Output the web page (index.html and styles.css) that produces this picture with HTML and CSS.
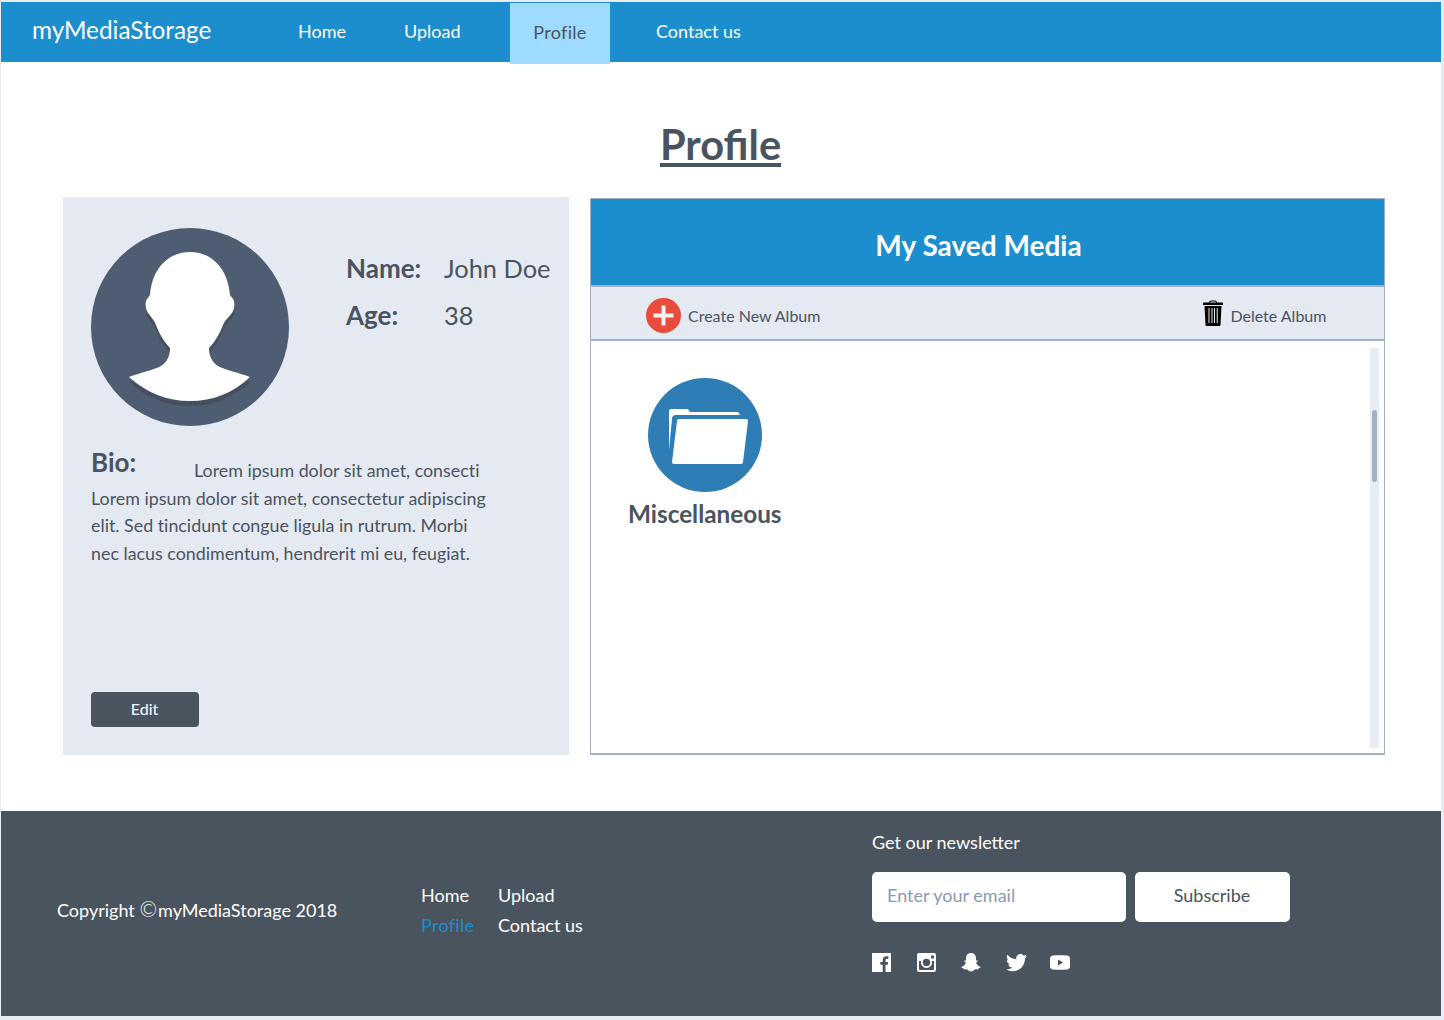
FILE: index.html
```html
<!DOCTYPE html>
<html lang="en">
<head>
<meta charset="utf-8">
<title>Profile - myMediaStorage</title>
<link rel="stylesheet" href="styles.css">
</head>
<body>
<div class="page">
  <header class="nav">
    <a class="brand">myMediaStorage</a>
    <nav class="nav-links">
      <a class="nav-link nav-home">Home</a>
      <a class="nav-link nav-upload">Upload</a>
      <a class="nav-link nav-active">Profile</a>
      <a class="nav-link nav-contact">Contact us</a>
    </nav>
  </header>

  <main class="main">
    <h1 class="title">Profile</h1>
    <div class="columns">
      <section class="card">
        <div class="card-top">
          <svg class="avatar" viewBox="0 0 198 198" aria-hidden="true">
            <circle cx="99" cy="99" r="99" fill="#4e5d72"/>
            <path fill="#454f61" transform="translate(0 5)" d="M99 24C78 24 61 40 59 67L56 71C54 74 54 80 57 85C60 89 63 92 65 97C68 105 73 114 79 120C79 128 76 134 70 138C63 142 48 145 38 149C56 165 76 173 99 173C122 173 142 165 159 149C149 145 134 142 127 138C121 134 118 128 118 120C124 114 129 105 132 97C134 92 138 89 141 85C144 80 144 74 142 71L139 67C137 40 120 24 99 24Z"/>
            <path fill="#fff" d="M99 24C78 24 61 40 59 67L56 71C54 74 54 80 57 85C60 89 63 92 65 97C68 105 73 114 79 120C79 128 76 134 70 138C63 142 48 145 38 149C56 165 76 173 99 173C122 173 142 165 159 149C149 145 134 142 127 138C121 134 118 128 118 120C124 114 129 105 132 97C134 92 138 89 141 85C144 80 144 74 142 71L139 67C137 40 120 24 99 24Z"/>
          </svg>
          <dl class="facts">
            <div class="fact"><dt>Name:</dt><dd>John Doe</dd></div>
            <div class="fact"><dt>Age:</dt><dd>38</dd></div>
          </dl>
        </div>
        <p class="bio"><strong class="bio-label">Bio:</strong>Lorem ipsum dolor sit amet, consecti<br>Lorem ipsum dolor sit amet, consectetur adipiscing elit. Sed tincidunt congue ligula in rutrum. Morbi nec lacus condimentum, hendrerit mi eu, feugiat.</p>
        <button class="edit" type="button">Edit</button>
      </section>

      <section class="media">
        <h2 class="media-head">My Saved Media</h2>
        <div class="toolbar">
          <a class="tool tool-create">
            <svg class="plus" viewBox="0 0 35 35" aria-hidden="true">
              <circle cx="17.5" cy="17.5" r="17.5" fill="#e74c3c"/>
              <path fill="#f4f4f4" d="M15.5 7.500h4v8h8v4h-8v8h-4v-8h-8v-4h8z"/>
            </svg>
            Create New Album
          </a>
          <a class="tool tool-delete">
            <svg class="trash" viewBox="0 0 20 26" aria-hidden="true">
              <path fill="#000" d="M6 2.500Q6 .5 8 .5H12Q14 .5 14 2.500H19.500Q20 2.500 20 3.500V5H0V3.500Q0 2.500 .5 2.500ZM7 2.500H13Q13 1.500 12 1.500H8Q7 1.500 7 2.500Z"/>
              <path fill="#000" fill-rule="evenodd" d="M1.500 6H18.500L17.500 25Q17.500 26 16.500 26H3.500Q2.500 26 2.500 25ZM5.500 8V23H6.500V8ZM8.500 8V23H9.500V8ZM11 8V23H12V8ZM13.700 8V23H14.700V8Z"/>
            </svg>
            Delete Album
          </a>
        </div>
        <div class="media-body">
          <div class="album">
            <svg class="folder" viewBox="0 0 114 114" aria-hidden="true">
              <circle cx="57" cy="57" r="57" fill="#2e7db5"/>
              <path fill="#fff" d="M21 33Q21 31 23 31H40L42 34H89Q91 34 92 37H28Q24 37 24 41L21 72Z"/>
              <path fill="#fff" d="M31 41H98Q100 41 100 43L95 84Q95 86 93 86H26Q24 86 24 84L29 43Q29 41 31 41Z"/>
            </svg>
            <span class="album-name">Miscellaneous</span>
          </div>
          <div class="scroll-track"><div class="scroll-thumb"></div></div>
        </div>
      </section>
    </div>
  </main>

  <footer class="footer">
    <p class="copyright">Copyright <span class="copy-mark">©</span>myMediaStorage 2018</p>
    <nav class="foot-links">
      <a class="foot-link">Home</a>
      <a class="foot-link">Upload</a>
      <a class="foot-link foot-active">Profile</a>
      <a class="foot-link">Contact us</a>
    </nav>
    <div class="news">
      <p class="news-title">Get our newsletter</p>
      <form class="news-form">
        <input class="news-input" type="text" placeholder="Enter your email">
        <button class="news-btn" type="button">Subscribe</button>
      </form>
      <div class="social">
        <svg class="soc soc-fb" viewBox="0 0 19 19" aria-hidden="true"><path fill="#fff" d="M0 0H19V19H13.500V11.800H15.800L16.200 9H13.500V7.300C13.500 6.400 13.800 5.900 15 5.900H16.300V3.300C15.900 3.200 15.200 3.200 14.400 3.200C12.200 3.200 10.700 4.500 10.700 6.900V9H8.300V11.800H10.700V19H0Z"/></svg>
        <svg class="soc soc-ig" viewBox="0 0 19 19" aria-hidden="true"><path fill="#fff" fill-rule="evenodd" d="M2 0H17Q19 0 19 2V17Q19 19 17 19H2Q0 19 0 17V2Q0 0 2 0ZM14 2.500V5.500H17V2.500ZM2 8V16Q2 17 3 17H16Q17 17 17 16V8H14.800A5.500 5.500 0 1 1 4.200 8ZM9.500 5.700A3.700 3.700 0 1 0 9.500 13.100A3.700 3.700 0 1 0 9.500 5.700Z"/></svg>
        <svg class="soc soc-sc" viewBox="0 0 20 19" aria-hidden="true"><path fill="#fff" d="M10 0C13.500 0 15 2.600 15 5.200V7.500C15.800 7.800 16.500 7.300 16.800 7.800C17 8.500 15.500 9 15.200 9.500C15.300 11.500 17.800 13.500 19.600 14C20 14.600 18.500 15.200 17.300 15.400C17 16 17 16.500 16.300 16.400C14.500 16.100 13.500 16.500 12.500 17.500C11 18.800 9 18.800 7.500 17.500C6.500 16.500 5.500 16.100 3.700 16.400C3 16.500 3 16 2.700 15.400C1.500 15.200 0 14.600 .4 14C2.200 13.500 4.700 11.500 4.800 9.500C4.500 9 3 8.500 3.200 7.800C3.500 7.300 4.200 7.800 5 7.500V5.200C5 2.600 6.500 0 10 0Z"/></svg>
        <svg class="soc soc-tw" viewBox="0 0 21 18" aria-hidden="true"><path fill="#fff" d="M21 2.100C20.200 2.500 19.400 2.700 18.500 2.800C19.400 2.300 20.100 1.400 20.400.4C19.600.9 18.600 1.300 17.700 1.500C16.900.6 15.800 0 14.500 0C12.100 0 10.200 2 10.200 4.300C10.200 4.700 10.200 5 10.300 5.300C6.700 5.100 3.500 3.400 1.400.8C1 1.500.8 2.200.8 3C.8 4.500 1.600 5.800 2.700 6.600C2 6.600 1.300 6.400.8 6.100V6.100C.8 8.200 2.300 10 4.200 10.400C3.500 10.600 2.800 10.600 2.200 10.500C2.700 12.200 4.300 13.500 6.200 13.500C4.700 14.700 2.900 15.400 .9 15.400C.6 15.400.3 15.400 0 15.300C1.900 16.500 4.200 17.200 6.600 17.200C14.500 17.200 18.900 10.600 18.900 4.900V4.400C19.700 3.800 20.400 3 21 2.100Z"/></svg>
        <svg class="soc soc-yt" viewBox="0 0 20 15" aria-hidden="true"><path fill="#fff" fill-rule="evenodd" d="M3 .5C7.500 .2 12.500 .2 17 .5C18.800 .6 20 1.800 20 3.500V11.500C20 13.200 18.800 14.400 17 14.500C12.500 14.800 7.500 14.800 3 14.500C1.200 14.400 0 13.200 0 11.500V3.500C0 1.800 1.200 .6 3 .5ZM8 4.500V10.500L13 7.500Z"/></svg>
      </div>
    </div>
  </footer>
</div>
</body>
</html>
```

FILE: styles.css
```css
* { box-sizing: border-box; }

html, body { margin: 0; padding: 0; }

body {
  background: #e8ecf4;
  color: #4a545e;
  font-family: Lato, "Open Sans", sans-serif;
  height: 1020px;
  overflow: hidden;
}

.page {
  background: #fff;
  width: 1440px;
  height: 1014px;
  margin: 2px 0 0 1px;
  display: flex;
  flex-direction: column;
}

/* Top bar */
.nav {
  background: #1c8dcd;
  height: 60px;
  display: flex;
  align-items: flex-start;
  flex: none;
}

.brand {
  color: #fff;
  font-size: 24.3px;
  line-height: 56px;
  margin-left: 31px;
  width: 266px;
}

.nav-links {
  display: flex;
  align-items: flex-start;
  height: 60px;
}

.nav-link {
  color: #fff;
  font-size: 18px;
  line-height: 58px;
}

.nav-home { width: 106px; }
.nav-upload { width: 106px; }

.nav-active {
  background: #9fdbff;
  color: #4a545e;
  width: 100px;
  height: 61px;
  margin-top: 1px;
  text-align: center;
  line-height: 59px;
  letter-spacing: .3px;
}

.nav-contact { margin-left: 46px; }

/* Main */
.main {
  flex: 1;
  padding: 0 56px 0 62px;
}

.title {
  margin: 52px 0 0 0;
  height: 83px;
  text-align: center;
  font-size: 41.6px;
  line-height: 60px;
  font-weight: 700;
  text-decoration: underline;
  color: #4a545e;
  padding-right: 7px;
}

.columns {
  display: flex;
  align-items: flex-start;
  gap: 21px;
}

/* Profile card */
.card {
  background: #e5e9f2;
  width: 506px;
  height: 558px;
  padding: 31px 0 28px 28px;
  display: flex;
  flex-direction: column;
}

.card-top {
  display: flex;
  align-items: flex-start;
  height: 198px;
}

.avatar { width: 198px; height: 198px; flex: none; }

.facts {
  margin: 16px 0 0 57px;
}

.fact {
  display: flex;
  height: 47px;
  align-items: center;
  font-size: 26px;
}

.fact dt { width: 98px; font-weight: 700; }
.fact dd { margin: 0; font-weight: 400; font-size: 25.4px; }

.bio {
  margin: 23px 0 0 0;
  width: 405px;
  font-size: 17.85px;
  line-height: 27.7px;
  font-variant-ligatures: none;
}

.bio-label {
  display: inline-block;
  width: 103px;
  font-size: 26px;
  line-height: 26px;
  font-weight: 700;
  vertical-align: 5px;
}

.edit {
  margin-top: auto;
  width: 108px;
  height: 35px;
  background: #4a545e;
  border: 0;
  border-radius: 4px;
  color: #fff;
  font: 400 16px Lato, sans-serif;
  padding: 0 1px 2px 0;
}

/* Saved media */
.media {
  width: 795px;
  height: 557px;
  margin-top: 1px;
  border: 1px solid #a3b1c6;
  border-bottom-width: 2px;
  display: flex;
  flex-direction: column;
}

.media-head {
  background: #1c8dcd;
  color: #fff;
  margin: 0;
  height: 86px;
  padding-right: 18px;
  font-size: 28px;
  line-height: 93px;
  font-weight: 700;
  text-align: center;
  flex: none;
}

.toolbar {
  background: #e5e9f2;
  height: 56px;
  flex: none;
  border-top: 2px solid #a3b1c6;
  border-bottom: 2px solid #a3b1c6;
  display: flex;
  align-items: center;
  padding: 4px 0 0 55px;
}

.tool {
  display: flex;
  align-items: center;
  font-size: 16px;
  color: #4a545e;
}

.tool-delete { margin-left: 383px; }

.plus { width: 35px; height: 35px; margin-right: 7px; }
.trash { width: 20px; height: 26px; margin: -4px 7px 0 0; }

.media-body {
  flex: 1;
  display: flex;
  justify-content: space-between;
  padding: 7px 5px 5px 37px;
}

.album {
  display: flex;
  flex-direction: column;
  align-items: center;
  margin-top: 30px;
  align-self: flex-start;
}

.folder { width: 114px; height: 114px; }

.album-name {
  font-size: 24.3px;
  font-weight: 700;
  line-height: 43px;
}

.scroll-track {
  background: #e8ecf4;
  width: 9px;
  padding: 62px 2px 0;
}

.scroll-thumb {
  background: #a3b1c6;
  width: 5px;
  height: 72px;
  border-radius: 3px;
}

/* Footer */
.footer {
  background: #4a545e;
  color: #fff;
  height: 205px;
  flex: none;
  display: flex;
  align-items: flex-start;
  padding-left: 56px;
  font-size: 18px;
}

.copyright {
  margin: 88px 0 0 0;
  width: 364px;
  line-height: 22px;
}

.copy-mark {
  font-size: 21px;
  font-weight: 300;
  line-height: 18px;
  margin-right: 1px;
}

.foot-links {
  display: grid;
  grid-template-columns: 77px auto;
  grid-auto-rows: 30px;
  margin-top: 69px;
  width: 451px;
  line-height: 30px;
}

.foot-active { color: #1c8dcd; letter-spacing: .3px; }

.news-title {
  margin: 20px 0 0 0;
  line-height: 22px;
}

.news-form {
  display: flex;
  gap: 9px;
  margin-top: 19px;
}

.news-input {
  width: 253.5px;
  height: 50px;
  border: 0;
  border-radius: 5px;
  padding: 0 15px 5px;
  font: 400 18px Lato, sans-serif;
  background: #fff;
  color: #4a545e;
}

.news-input::placeholder { color: #8a9ab2; opacity: 1; }

.news-btn {
  width: 155px;
  height: 50px;
  border: 0;
  border-radius: 5px;
  background: #fff;
  color: #4a545e;
  font: 400 18px Lato, sans-serif;
  padding: 0 0 5px;
}

.social {
  display: flex;
  align-items: center;
  margin-top: 31px;
  height: 19px;
}

.soc { display: block; flex: none; }
.soc-fb { width: 19px; height: 19px; margin-right: 26px; }
.soc-ig { width: 19px; height: 19px; margin-right: 25px; }
.soc-sc { width: 20px; height: 19px; margin-right: 25px; }
.soc-tw { width: 21px; height: 18px; margin-right: 23px; }
.soc-yt { width: 20px; height: 15px; }
```
